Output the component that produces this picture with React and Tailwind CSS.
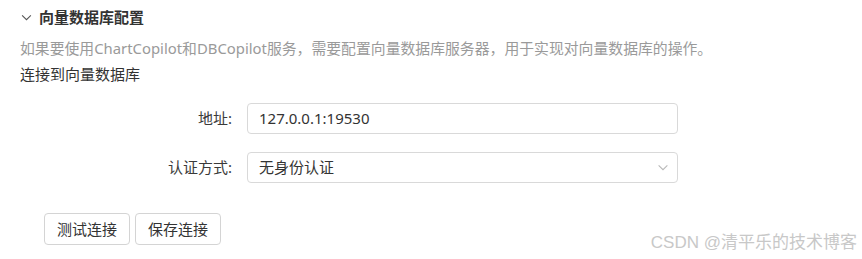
import React from "react";

const font = { fontFamily: '"Noto Sans", "Noto Sans CJK SC", sans-serif' };

const Chevron = ({ className }) => (
  <svg viewBox="0 0 12 8" className={className} fill="none" stroke="currentColor" strokeWidth="1.2">
    <polyline points="1,1.5 6,6.5 11,1.5" />
  </svg>
);

const FormRow = ({ label, children }) => (
  <div className="flex items-center">
    <div className="w-[213px] text-right text-[15px] text-[#3a3a3a] pr-[1px]">{label}</div>
    <div className="ml-[14px] w-[431px]">{children}</div>
  </div>
);

export default function App() {
  return (
    <div className="relative w-[862px] h-[259px] bg-white overflow-hidden" style={font}>
      <div className="px-[20px]">
        <div className="flex items-center h-[35px]">
          <Chevron className="w-[11px] h-[7px] ml-[1px] text-[#555]" />
          <span className="ml-[7px] text-[15px] font-bold text-[#333]">向量数据库配置</span>
        </div>
        <p className="leading-[26px] text-[14.85px] text-[#9a9a9a] whitespace-nowrap">
          如果要使用ChartCopilot和DBCopilot服务，需要配置向量数据库服务器，用于实现对向量数据库的操作。
        </p>
        <p className="leading-[26px] text-[15px] text-[#333]">连接到向量数据库</p>

        <div className="mt-[16px] flex flex-col gap-[18px]">
          <FormRow label="地址:">
            <div className="h-[31px] rounded-[4px] border border-[#d9d9d9] px-[11px] flex items-center text-[15px] text-[#333]">
              127.0.0.1:19530
            </div>
          </FormRow>
          <FormRow label="认证方式:">
            <div className="h-[31px] rounded-[4px] border border-[#d9d9d9] pl-[11px] pr-[8px] flex items-center justify-between text-[15px] text-[#333]">
              <span>无身份认证</span>
              <Chevron className="w-[12px] h-[7px] text-[#b8b8b8]" />
            </div>
          </FormRow>
        </div>

        <div className="mt-[30px] ml-[24px] flex gap-[5px]">
          <button className="w-[86px] h-[32px] rounded-[4px] border border-[#d4d4d4] bg-white text-[15px] text-[#333]">
            测试连接
          </button>
          <button className="w-[86px] h-[32px] rounded-[4px] border border-[#d4d4d4] bg-white text-[15px] text-[#333]">
            保存连接
          </button>
        </div>
      </div>

      <div
        className="absolute right-[5px] bottom-[4px] text-[17px] text-[#c8c8c8] whitespace-nowrap"
        style={{ fontFamily: '"Liberation Sans", "Noto Sans CJK SC", sans-serif' }}
      >
        CSDN @清平乐的技术博客
      </div>
    </div>
  );
}
